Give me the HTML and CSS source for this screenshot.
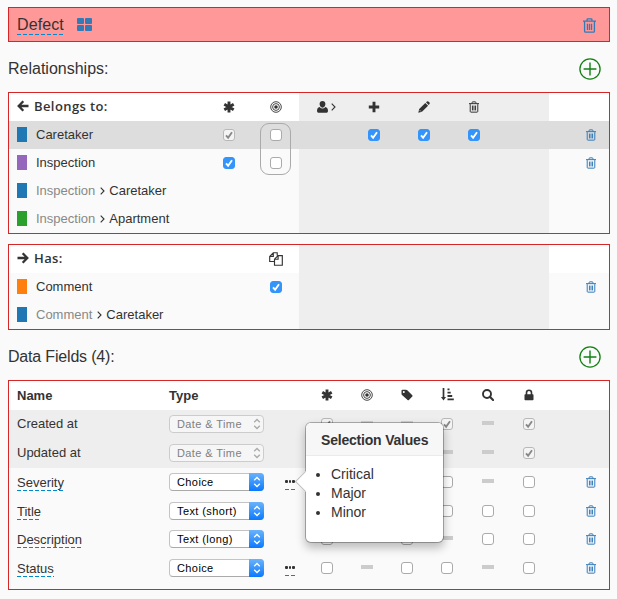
FILE: index.html
```html
<!DOCTYPE html>
<html lang="en">
<head>
<meta charset="utf-8">
<title>Defect</title>
<link rel="stylesheet" href="styles.css">
</head>
<body>
<svg class="sprite" aria-hidden="true">
  <symbol id="trash" viewBox="0 0 14 16"><path d="M0 3.300h14M4.400 3.200V1.500q0-.7.7-.7h3.800q.7 0 .7.7v1.700M1.700 4v10.200q0 1 1 1h8.600q1 0 1-1V4M4.800 6v6.800M7 6v6.800M9.200 6v6.800" fill="none" stroke="currentColor" stroke-width="1.400"/></symbol>
  <symbol id="add" viewBox="0 0 22 22"><circle cx="11" cy="11" r="10.1" fill="none" stroke="currentColor" stroke-width="1.3"/><path d="M11 4.6v12.8M4.6 11h12.8" fill="none" stroke="currentColor" stroke-width="1.4"/></symbol>
  <symbol id="asterisk" viewBox="0 0 12 12"><path d="M6 .6v10.8M1.300 3.300l9.400 5.400M1.300 8.700l9.400-5.400" stroke="currentColor" stroke-width="2.900"/></symbol>
  <symbol id="target" viewBox="0 0 12 12"><g fill="none" stroke="currentColor" stroke-width=".9"><circle cx="6" cy="6" r="5.3"/><circle cx="6" cy="6" r="3.4"/></g><circle cx="6" cy="6" r="1.8" fill="currentColor"/></symbol>
  <symbol id="check" viewBox="0 0 12 12"><path d="M3 6.4l2.1 2.300L9 3.300" fill="none" stroke="currentColor" stroke-width="1.900"/></symbol>
  <symbol id="user" viewBox="0 0 11 12"><path d="M5.500 0C7.300 0 8.400 1.300 8.400 3.100S7.200 6.700 5.500 6.700 2.600 4.900 2.600 3.100 3.700 0 5.500 0zM2.600 6Q4 7.600 5.500 7.600T8.400 6Q11 6.400 11 10q0 1.700-1.400 1.700H1.400Q0 11.700 0 10 0 6.400 2.600 6z" fill="currentColor"/></symbol>
  <symbol id="chevron" viewBox="0 0 5 8"><path d="M.7.600L4 4 .7 7.400" fill="none" stroke="currentColor" stroke-width="1.100"/></symbol>
  <symbol id="plus" viewBox="0 0 12 12"><path d="M6 .8v10.400M.8 6h10.400" stroke="currentColor" stroke-width="2.900"/></symbol>
  <symbol id="pencil" viewBox="0 0 12 12"><path d="M7.300 1.900l2.800 2.800-6.100 6.100L.3 11.700l.9-3.700zM8 1.300L9 .5q.7-.6 1.400 0l1.100 1.100q.6.700 0 1.400l-.9 1z" fill="currentColor"/><path d="M1.700 9.200l1.200 1.200" stroke="#eee" stroke-width=".7"/></symbol>
  <symbol id="left" viewBox="0 0 12 12"><path d="M6.300 1.300L1.700 6l4.600 4.700M2 6h9.500" fill="none" stroke="currentColor" stroke-width="2.300"/></symbol>
  <symbol id="right" viewBox="0 0 12 12"><path d="M5.700 1.300L10.300 6l-4.600 4.700M10 6H.5" fill="none" stroke="currentColor" stroke-width="2.300"/></symbol>
  <symbol id="copy" viewBox="0 0 14 14"><path d="M5.500 9.500H.7V4.400L4.300.7h3.900v2.800M4.300.7v3.700H.7M9.100 3.600h4.200v9.700H5.500V7.200zM9.100 3.600v3.600H5.500" fill="none" stroke="currentColor" stroke-width="1.150"/></symbol>
  <symbol id="grid" viewBox="0 0 15 13"><g fill="currentColor"><rect width="7" height="6" rx="1"/><rect x="8" width="7" height="6" rx="1"/><rect y="7" width="7" height="6" rx="1"/><rect x="8" y="7" width="7" height="6" rx="1"/></g></symbol>
  <symbol id="tag" viewBox="0 0 12 12"><path fill-rule="evenodd" d="M.5 1.800Q.5.700 1.600.700H5q.7 0 1.300.6l5 4.900q.6.700 0 1.300l-3.400 3.400q-.7.600-1.300 0L1 6Q.5 5.500.5 4.800zM2.800 2a1 1 0 100 2 1 1 0 000-2z" fill="currentColor"/></symbol>
  <symbol id="sort" viewBox="0 0 13 13"><path d="M2.500 0v10" stroke="currentColor" stroke-width="1.700"/><path d="M0 9h5l-2.500 3.500z" fill="currentColor"/><path d="M6.500 1.300h2M6.500 4.600h3.200M6.500 8h4.700M6.500 11.400h6.300" stroke="currentColor" stroke-width="1.800"/></symbol>
  <symbol id="search" viewBox="0 0 12 12"><circle cx="5" cy="5" r="4" fill="none" stroke="currentColor" stroke-width="1.900"/><path d="M7.800 7.800l3.300 3.300" stroke="currentColor" stroke-width="2.100" stroke-linecap="round"/></symbol>
  <symbol id="lock" viewBox="0 0 10 12"><path d="M2.500 6V3.700a2.500 2.500 0 015 0V6" fill="none" stroke="currentColor" stroke-width="1.600"/><rect x=".5" y="5.300" width="9" height="6" rx=".8" fill="currentColor"/></symbol>
  <symbol id="updown" viewBox="0 0 8 12"><path d="M1.200 4.200L4 1.500l2.800 2.700M1.200 7.800L4 10.500l2.800-2.700" fill="none" stroke="currentColor" stroke-width="1.300"/></symbol>
</svg>

<header class="entity">
  <span class="editable">Defect</span>
  <svg class="ico-grid"><use href="#grid"/></svg>
  <svg class="ico-trash-lg"><use href="#trash"/></svg>
</header>

<div class="heading"><h2>Relationships:</h2><svg class="add"><use href="#add"/></svg></div>

<section class="box relations">
  <div class="row head">
    <div class="title"><svg class="ico"><use href="#left"/></svg>Belongs to:</div>
    <div class="cell"><svg class="ico"><use href="#asterisk"/></svg></div>
    <div class="cell"><svg class="ico"><use href="#target"/></svg></div>
    <div class="cell shade user"><svg class="ico-user"><use href="#user"/></svg><svg class="ico-chev"><use href="#chevron"/></svg></div>
    <div class="cell shade"><svg class="ico"><use href="#plus"/></svg></div>
    <div class="cell shade"><svg class="ico"><use href="#pencil"/></svg></div>
    <div class="cell shade"><svg class="ico-trash"><use href="#trash"/></svg></div>
    <div class="cell shade"></div>
    <div></div>
  </div>
  <div class="row selected">
    <div class="name"><i class="swatch blue"></i>Caretaker</div>
    <div class="cell"><span class="cb off"><svg><use href="#check"/></svg></span></div>
    <div class="cell anchor"><span class="cb"></span><span class="group"></span></div>
    <div class="cell"></div>
    <div class="cell"><span class="cb on"><svg><use href="#check"/></svg></span></div>
    <div class="cell"><span class="cb on"><svg><use href="#check"/></svg></span></div>
    <div class="cell"><span class="cb on"><svg><use href="#check"/></svg></span></div>
    <div class="cell"></div>
    <div class="del"><svg class="ico-trash"><use href="#trash"/></svg></div>
  </div>
  <div class="row">
    <div class="name"><i class="swatch purple"></i>Inspection</div>
    <div class="cell"><span class="cb on"><svg><use href="#check"/></svg></span></div>
    <div class="cell"><span class="cb"></span></div>
    <div class="shade wide"></div>
    <div class="del"><svg class="ico-trash"><use href="#trash"/></svg></div>
  </div>
  <div class="row">
    <div class="name"><i class="swatch blue"></i><span class="muted">Inspection</span><svg class="ico-chev"><use href="#chevron"/></svg>Caretaker</div>
    <div></div><div></div><div class="shade wide"></div><div></div>
  </div>
  <div class="row">
    <div class="name"><i class="swatch green"></i><span class="muted">Inspection</span><svg class="ico-chev"><use href="#chevron"/></svg>Apartment</div>
    <div></div><div></div><div class="shade wide"></div><div></div>
  </div>
</section>

<section class="box relations">
  <div class="row head">
    <div class="title"><svg class="ico"><use href="#right"/></svg>Has:</div>
    <div></div>
    <div class="cell"><svg class="ico-copy"><use href="#copy"/></svg></div>
    <div class="shade wide"></div><div></div>
  </div>
  <div class="row">
    <div class="name"><i class="swatch orange"></i>Comment</div>
    <div></div>
    <div class="cell"><span class="cb on"><svg><use href="#check"/></svg></span></div>
    <div class="shade wide"></div>
    <div class="del"><svg class="ico-trash"><use href="#trash"/></svg></div>
  </div>
  <div class="row">
    <div class="name"><i class="swatch blue"></i><span class="muted">Comment</span><svg class="ico-chev"><use href="#chevron"/></svg>Caretaker</div>
    <div></div><div></div><div class="shade wide"></div><div></div>
  </div>
</section>

<div class="heading"><h2 class="tight">Data Fields (4):</h2><svg class="add"><use href="#add"/></svg></div>

<section class="box fields">
  <div class="field head">
    <div class="label">Name</div><div>Type</div><div></div>
    <div class="cell"><svg class="ico"><use href="#asterisk"/></svg></div>
    <div class="cell"><svg class="ico"><use href="#target"/></svg></div>
    <div class="cell"><svg class="ico"><use href="#tag"/></svg></div>
    <div class="cell"><svg class="ico-sort"><use href="#sort"/></svg></div>
    <div class="cell"><svg class="ico"><use href="#search"/></svg></div>
    <div class="cell"><svg class="ico-lock"><use href="#lock"/></svg></div>
    <div></div>
  </div>
  <div class="field system">
    <div class="label">Created at</div>
    <div><span class="select disabled">Date &amp; Time<b><svg><use href="#updown"/></svg></b></span></div>
    <div></div>
    <div class="cell"><span class="cb off"><svg><use href="#check"/></svg></span></div>
    <div class="cell"><i class="dash"></i></div>
    <div class="cell"><i class="dash"></i></div>
    <div class="cell"><span class="cb off"><svg><use href="#check"/></svg></span></div>
    <div class="cell"><i class="dash"></i></div>
    <div class="cell"><span class="cb off"><svg><use href="#check"/></svg></span></div>
    <div></div>
  </div>
  <div class="field system">
    <div class="label">Updated at</div>
    <div><span class="select disabled">Date &amp; Time<b><svg><use href="#updown"/></svg></b></span></div>
    <div></div>
    <div class="cell"><span class="cb off"><svg><use href="#check"/></svg></span></div>
    <div class="cell"><i class="dash"></i></div>
    <div class="cell"><i class="dash"></i></div>
    <div class="cell"><i class="dash"></i></div>
    <div class="cell"><i class="dash"></i></div>
    <div class="cell"><span class="cb off"><svg><use href="#check"/></svg></span></div>
    <div></div>
  </div>
  <div class="field">
    <div class="label"><span class="editable">Severity</span></div>
    <div><span class="select">Choice<b><svg><use href="#updown"/></svg></b></span></div>
    <div class="cell anchor"><span class="dots"><i></i><i></i><i></i></span>
      <div class="popover">
        <h3>Selection Values</h3>
        <ul><li>Critical</li><li>Major</li><li>Minor</li></ul>
      </div>
    </div>
    <div class="cell"><span class="cb"></span></div>
    <div class="cell"><i class="dash"></i></div>
    <div class="cell"><span class="cb"></span></div>
    <div class="cell"><span class="cb"></span></div>
    <div class="cell"><i class="dash"></i></div>
    <div class="cell"><span class="cb"></span></div>
    <div class="del"><svg class="ico-trash"><use href="#trash"/></svg></div>
  </div>
  <div class="field short">
    <div class="label"><span class="editable">Title</span></div>
    <div><span class="select">Text (short)<b><svg><use href="#updown"/></svg></b></span></div>
    <div></div>
    <div class="cell"><span class="cb"></span></div>
    <div class="cell"><span class="cb"></span></div>
    <div class="cell"><span class="cb"></span></div>
    <div class="cell"><span class="cb"></span></div>
    <div class="cell"><span class="cb"></span></div>
    <div class="cell"><span class="cb"></span></div>
    <div class="del"><svg class="ico-trash"><use href="#trash"/></svg></div>
  </div>
  <div class="field">
    <div class="label"><span class="editable">Description</span></div>
    <div><span class="select">Text (long)<b><svg><use href="#updown"/></svg></b></span></div>
    <div></div>
    <div class="cell"><span class="cb"></span></div>
    <div class="cell"><i class="dash"></i></div>
    <div class="cell"><span class="cb"></span></div>
    <div class="cell"><i class="dash"></i></div>
    <div class="cell"><span class="cb"></span></div>
    <div class="cell"><span class="cb"></span></div>
    <div class="del"><svg class="ico-trash"><use href="#trash"/></svg></div>
  </div>
  <div class="field">
    <div class="label"><span class="editable">Status</span></div>
    <div><span class="select">Choice<b><svg><use href="#updown"/></svg></b></span></div>
    <div class="cell"><span class="dots"><i></i><i></i><i></i></span></div>
    <div class="cell"><span class="cb"></span></div>
    <div class="cell"><i class="dash"></i></div>
    <div class="cell"><span class="cb"></span></div>
    <div class="cell"><span class="cb"></span></div>
    <div class="cell"><i class="dash"></i></div>
    <div class="cell"><span class="cb"></span></div>
    <div class="del"><svg class="ico-trash"><use href="#trash"/></svg></div>
  </div>
</section>
</body>
</html>
```
FILE: styles.css
```css
* { box-sizing: border-box; }
body {
  margin: 0;
  padding: 7px 7px 0 8px;
  background: #fafafa;
  color: #333;
  font: 13px/16px "Liberation Sans", Arial, sans-serif;
}
svg { display: block; flex: none; }
.sprite { position: absolute; width: 0; height: 0; }

.entity {
  display: flex;
  align-items: center;
  height: 35px;
  padding: 1px 13px 0 8px;
  background: #f99;
  border: 1px solid #d62728;
  font-size: 16px;
  line-height: 18px;
}
.editable, .dots {
  padding-bottom: 1px;
  background: repeating-linear-gradient(90deg, #08c 0 4px, transparent 4px 6px) left bottom / 100% 1px no-repeat;
}
.entity .editable { margin-top: 1px; letter-spacing: .1px; }
.ico-grid { width: 15px; height: 13px; margin: -1px 0 0 13px; color: #337ab7; }
.ico-trash-lg { width: 13px; height: 15px; margin-left: auto; color: #337ab7; }

.heading {
  display: flex;
  align-items: center;
  justify-content: space-between;
  height: 50px;
  padding: 4px 9px 0 0;
}
.heading h2 { margin: 0; font-size: 16px; font-weight: normal; line-height: 20px; }
.heading h2.tight { letter-spacing: -.18px; }
.add { width: 22px; height: 22px; color: #128012; }

.box { border: 1px solid #d62728; }
.relations + .relations { margin-top: 10px; }
.row {
  display: grid;
  grid-template-columns: 197px 46px 47px repeat(5, 50px) 60px;
  height: 28px;
}
.head { background: #fff; }
.selected { background: #ddd; }
.shade { background: #eee; }
.wide { grid-column: span 5; }
.cell, .name, .title, .del { display: flex; align-items: center; }
.cell { justify-content: center; }
.name { padding-left: 8px; white-space: nowrap; }
.title {
  padding: 0 0 2px 8px;
  gap: 5px;
  font: 600 13px/16px "Open Sans", "Noto Sans", sans-serif;
  letter-spacing: .4px;
}
.row.head .cell { padding-bottom: 1px; }
.muted { color: #888; }
.name .ico-chev { margin: 0 4px 0 5px; }
.swatch { width: 10px; height: 15px; margin: -1px 9px 0 0; }
.blue { background: #1f77b4; }
.purple { background: #9467bd; }
.green { background: #2ca02c; }
.orange { background: #ff7f0e; }

.ico { width: 12px; height: 12px; }
.ico-trash { width: 10px; height: 12px; }
.ico-user { width: 11px; height: 12px; }
.ico-chev { width: 5px; height: 8px; }
.ico-copy { width: 14px; height: 14px; }
.ico-sort { width: 13px; height: 13px; }
.ico-lock { width: 10px; height: 12px; }
.user { gap: 3px; padding-left: 4px; }
.del { justify-content: flex-end; padding: 0 13px 1px 0; color: #337ab7; }

.cb {
  width: 12px;
  height: 12px;
  background: #fff;
  border: 1px solid #aaa;
  border-radius: 3px;
}
.cb svg { width: 12px; height: 12px; margin: -1px; }
.cb.on { background: #3395fb; border-color: #3395fb; color: #fff; }
.cb.off { background: #f4f4f4; border-color: #b8b8b8; color: #888; }

.anchor { position: relative; }
.group {
  position: absolute;
  left: 8px;
  top: 2px;
  width: 31px;
  height: 52px;
  border: 1px solid #aaa;
  border-radius: 9px;
}

.fields { height: 210px; }
.field {
  display: grid;
  grid-template-columns: 160px 104px 34px repeat(4, 40px) 41px 41px 60px;
  align-items: center;
  height: 29px;
  padding-bottom: 1px;
}
.field.short { height: 28px; padding: 0; }
.field.head { padding: 0; font-weight: bold; }
.field.head .cell { padding-bottom: 2px; }
.field .del { padding-bottom: 0; }
.system { background: #eee; }
.label { padding-left: 8px; }
.label .editable { display: inline-block; vertical-align: top; line-height: 15px; margin-top: 1px; }

.select {
  display: flex;
  width: 95px;
  height: 18px;
  padding-left: 7px;
  background: #fff;
  border: 1px solid #c4c4c4;
  border-bottom-color: #aaa;
  border-radius: 4px;
  color: #000;
  font-size: 11px;
  line-height: 17px;
  letter-spacing: .4px;
  white-space: nowrap;
}
.select b {
  display: flex;
  align-items: center;
  justify-content: center;
  width: 15px;
  height: 18px;
  margin: -1px -1px -1px auto;
  border-radius: 0 4px 4px 0;
  background: linear-gradient(#6bb3fa, #0a79ff);
  color: #fff;
}
.select b svg { width: 8px; height: 12px; }
.select.disabled { background: #f6f6f6; border-color: #ccc; color: #808080; }
.select.disabled b { background: none; color: #aaa; }

.dash { width: 12px; height: 4px; margin-top: -2px; background: #ccc; }
.dots {
  display: flex;
  gap: 1px;
  width: 10px;
  height: 10px;
  margin-top: 6px;
}
.dots i { width: 3px; height: 3px; background: #333; border-radius: 1px; }

.popover {
  position: absolute;
  z-index: 2;
  left: 32px;
  top: -52px;
  width: 139px;
  height: 121px;
  background: #fff;
  background-clip: padding-box;
  border: 1px solid rgba(0, 0, 0, .28);
  border-radius: 6px;
  box-shadow: 0 5px 10px rgba(0, 0, 0, .25);
}
.popover::before {
  content: "";
  position: absolute;
  left: -8px;
  top: 51px;
  width: 14px;
  height: 14px;
  background: #fff;
  border: solid #bbb;
  border-width: 0 0 1px 1px;
  transform: rotate(45deg);
}
.popover h3 {
  height: 33px;
  margin: 0;
  padding-left: 15px;
  background: #f7f7f7;
  border-bottom: 1px solid #ebebeb;
  border-radius: 5px 5px 0 0;
  font-size: 14px;
  line-height: 34px;
  letter-spacing: -.2px;
  white-space: nowrap;
}
.popover ul { margin: 9px 0 0; padding-left: 25px; font-size: 14px; line-height: 19px; }
```
